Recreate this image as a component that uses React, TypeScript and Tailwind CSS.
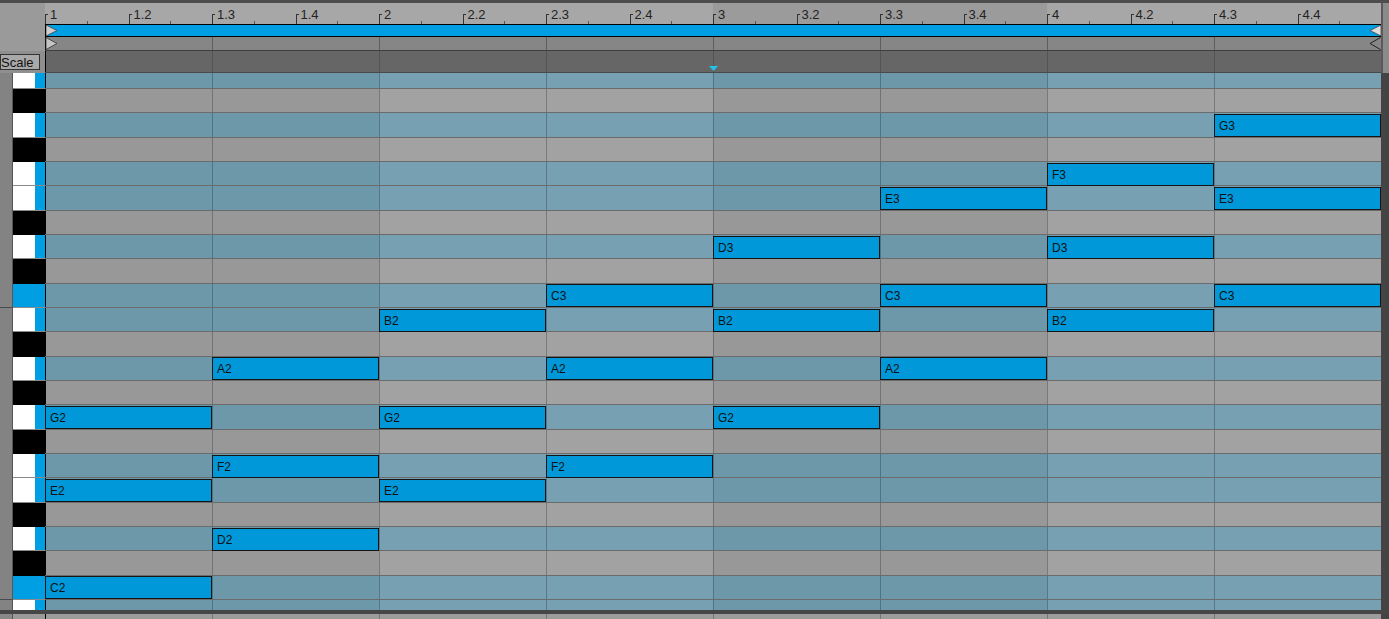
import React from 'react';

const QW = 83.5; // quarter note width
const ROW = 24.333;

type Key = { name: string; black: boolean };

const keys: Key[] = [
  'A3', 'G#3', 'G3', 'F#3', 'F3', 'E3', 'D#3', 'D3', 'C#3', 'C3', 'B2', 'A#2',
  'A2', 'G#2', 'G2', 'F#2', 'F2', 'E2', 'D#2', 'D2', 'C#2', 'C2', 'B1',
].map((n) => ({ name: n, black: n.includes('#') }));

// [pitch, start in quarters]
const notes: [string, number][] = [
  ['C2', 0], ['E2', 0], ['G2', 0],
  ['D2', 2], ['F2', 2], ['A2', 2],
  ['E2', 4], ['G2', 4], ['B2', 4],
  ['F2', 6], ['A2', 6], ['C3', 6],
  ['G2', 8], ['B2', 8], ['D3', 8],
  ['A2', 10], ['C3', 10], ['E3', 10],
  ['B2', 12], ['D3', 12], ['F3', 12],
  ['C3', 14], ['E3', 14], ['G3', 14],
];

const font = { fontFamily: '"Liberation Sans", Arial, sans-serif' };

const rulerBg = (i: number) => (i >= 8 && i < 12 ? 'bg-[#9b9b9b]' : 'bg-[#a7a7a7]');

const Ruler = () => (
  <div className="flex h-[21px]">
    <div className="w-[45px] bg-[#9a9a9a]" />
    <div className="flex">
      {Array.from({ length: 16 }).map((_, i) => {
        const label = i % 4 === 0 ? `${i / 4 + 1}` : `${Math.floor(i / 4) + 1}.${(i % 4) + 1}`;
        return (
          <div key={i} className={`relative w-[83.5px] h-full ${rulerBg(i)}`}>
            <div className="absolute left-0 bottom-0 w-px h-[10px] bg-[#333]" />
            <div className="absolute left-0 top-[11px] w-[3px] h-px bg-[#333]" />
            <div className="absolute left-[41.75px] bottom-0 w-px h-[3px] bg-[#555]" />
            <span className="absolute left-[5px] top-[5px] text-[13px] leading-[14px] text-[#222]">{label}</span>
          </div>
        );
      })}
    </div>
    <div className="flex-1 bg-[#8b8b8b] border-l-2 border-[#5a5a5a]" />
  </div>
);

const LoopBar = () => (
  <div className="flex h-[13px]">
    <div className="w-[45px] bg-[#9a9a9a]" />
    <div className="relative w-[1336px] bg-[#009fe3] border-y border-l border-black">
      <svg width="12" height="11" viewBox="0 0 12 11" className="absolute left-0 top-0">
        <path d="M0 0 L11 5.5 L0 11 Z" fill="#cfcfcf" stroke="#444" strokeWidth="0.8" />
      </svg>
      <svg width="12" height="11" viewBox="0 0 12 11" className="absolute right-0 top-0">
        <path d="M12 0 L1 5.5 L12 11 Z" fill="#dedede" stroke="#444" strokeWidth="0.8" />
      </svg>
    </div>
    <div className="flex-1 bg-[#8b8b8b] border-l-2 border-[#5a5a5a]" />
  </div>
);

const StartBar = () => (
  <div className="flex h-[14px]">
    <div className="w-[45px] bg-[#9a9a9a]" />
    <div className="relative flex w-[1336px] bg-[#868686] border-b border-[#3f3f3f]">
      {Array.from({ length: 8 }).map((_, i) => (
        <div key={i} className={`w-[167px] h-full border-l ${i === 0 ? 'border-black' : 'border-[#5e5e5e]'}`} />
      ))}
      <svg width="13" height="13" viewBox="0 0 13 13" className="absolute left-0 top-0">
        <path d="M1 0.5 L12 6.5 L1 12.5 Z" fill="#c4c4c4" stroke="#333" strokeWidth="0.8" />
      </svg>
      <svg width="13" height="13" viewBox="0 0 13 13" className="absolute right-0 top-0">
        <path d="M12.5 0.5 L2 6.5 L12.5 12.5" fill="none" stroke="#222" strokeWidth="1" />
      </svg>
    </div>
    <div className="flex-1 bg-[#8b8b8b] border-l-2 border-[#5a5a5a]" />
  </div>
);

const ScaleStrip = () => (
  <div className="flex h-[22px]">
    <div className="w-[45px] bg-[#8f8f8f] pt-[3px]">
      <div className="w-[40px] h-[16px] border border-[#333] bg-[#a9a9a9] overflow-hidden flex items-center">
        <span className="text-[13px] leading-none text-[#111]">Scale</span>
      </div>
    </div>
    <div className="relative flex w-[1336px] bg-[#666666] border-b border-[#4a4a4a]">
      {Array.from({ length: 8 }).map((_, i) => (
        <div key={i} className={`w-[167px] h-full border-l ${i === 0 ? 'border-black' : 'border-[#545454]'}`} />
      ))}
      <svg width="9" height="5" viewBox="0 0 9 5" className="absolute left-[664px] bottom-[1px]">
        <path d="M0 0 L9 0 L4.5 5 Z" fill="#1fc4ea" />
      </svg>
    </div>
    <div className="flex-1 bg-[#8b8b8b] border-l-2 border-[#5a5a5a]" />
  </div>
);

const cellBg = (band: number, inScale: boolean) => {
  const dark = band < 2 || (band >= 4 && band < 6);
  if (inScale) return dark ? 'bg-[#6c98aa]' : 'bg-[#77a1b3]';
  return dark ? 'bg-[#989898]' : 'bg-[#a2a2a2]';
};

const PianoKey = ({ k }: { k: Key }) => {
  const isC = k.name.startsWith('C') && !k.black;
  return (
    <div className="flex h-[24.333px]">
      <div className={`w-[13px] h-full bg-[#838383] border-r border-[#555] ${isC ? 'border-b border-b-[#4a4a4a]' : ''}`} />
      {k.black ? (
        <div className="w-[32px] h-full bg-black" />
      ) : isC ? (
        <div className="w-[32px] h-full bg-[#009fe3] border-b border-[#8a8a8a]" />
      ) : (
        <div className="w-[32px] h-full flex border-b border-[#8a8a8a]">
          <div className="flex-1 bg-white" />
          <div className="w-[10px] bg-[#009fe3]" />
        </div>
      )}
    </div>
  );
};

const GridRow = ({ k }: { k: Key }) => (
  <div className="flex h-[24.333px] border-b border-[#6b6b6b]">
    {Array.from({ length: 8 }).map((_, i) => (
      <div
        key={i}
        className={`w-[167px] h-full border-l ${i === 0 ? 'border-black' : 'border-black/25'} ${cellBg(i, !k.black)}`}
      />
    ))}
  </div>
);

const Grid = () => (
  <div className="flex h-[537px] overflow-hidden">
    <div className="w-[45px] h-full overflow-hidden">
      <div className="-mt-[8.333px]">
        {keys.map((k) => (
          <PianoKey key={k.name} k={k} />
        ))}
      </div>
    </div>
    <div className="relative w-[1336px] h-full overflow-hidden">
      <div className="-mt-[8.333px]">
        {keys.map((k) => (
          <GridRow key={k.name} k={k} />
        ))}
      </div>
      {notes.map(([p, q], i) => {
        const idx = keys.findIndex((k) => k.name === p);
        return (
          <div
            key={i}
            className="absolute h-[23px] w-[167px] bg-[#0098d9] border border-[#141414] flex items-center pl-[4px] pt-px text-[12px] text-[#111]"
            style={{ left: q * QW, top: -8.333 + idx * ROW + 0.7 }}
          >
            {p}
          </div>
        );
      })}
    </div>
  </div>
);

const BottomLane = () => (
  <div className="flex h-[5px]">
    <div className="w-[13px] bg-[#888] border-r border-[#555]" />
    <div className="w-[32px] bg-[#9a9a9a]" />
    <div className="flex w-[1336px]">
      {Array.from({ length: 8 }).map((_, i) => (
        <div key={i} className={`w-[167px] h-full border-l ${i === 0 ? 'border-black' : 'border-[#777]'} bg-[#9c9c9c]`} />
      ))}
    </div>
    <div className="flex-1 bg-[#444]" />
  </div>
);

export default function App() {
  return (
    <div className="w-[1389px] h-[619px] bg-[#444] overflow-hidden flex flex-col select-none" style={font}>
      <div className="h-[3px] bg-[#4d4d4d]" />
      <Ruler />
      <LoopBar />
      <StartBar />
      <ScaleStrip />
      <Grid />
      <div className="h-[4px] bg-[#464646]" />
      <BottomLane />
    </div>
  );
}
